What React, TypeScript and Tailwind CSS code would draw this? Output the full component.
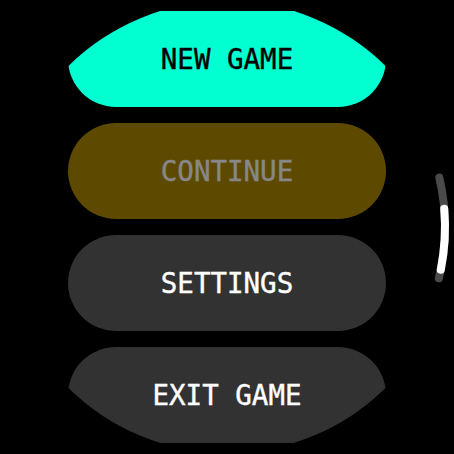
import React from "react";

const items = [
  { label: "NEW GAME", cls: "bg-[#02ffd2] text-black" },
  { label: "CONTINUE", cls: "bg-[#5d4a00] text-[#878787]" },
  { label: "SETTINGS", cls: "bg-[#323232] text-white" },
  { label: "EXIT GAME", cls: "bg-[#323232] text-white" },
];

function arc(r: number, a0: number, a1: number) {
  const cx = 227;
  const cy = 227;
  const p = (a: number) => {
    const t = (a * Math.PI) / 180;
    return [cx + r * Math.cos(t), cy + r * Math.sin(t)];
  };
  const [x0, y0] = p(a0);
  const [x1, y1] = p(a1);
  return `M ${x0} ${y0} A ${r} ${r} 0 0 1 ${x1} ${y1}`;
}

export default function App() {
  return (
    <div className="relative w-[454px] h-[454px] bg-black overflow-hidden">
      <div
        className="w-[454px] h-[454px] flex flex-col gap-[16px] px-[68px] pt-[11px] [clip-path:circle(226px_at_227px_227px)]"
        style={{ fontFamily: '"DejaVu Sans Mono", monospace' }}
      >
        {items.map((it) => (
          <div
            key={it.label}
            className={`h-[96px] shrink-0 rounded-full flex items-center justify-center pt-[2px] text-[27.5px] leading-none [-webkit-text-stroke:0.4px_currentColor] ${it.cls}`}
          >
            {it.label}
          </div>
        ))}
      </div>
      <svg
        className="absolute left-0 top-0"
        width="454"
        height="454"
        viewBox="0 0 454 454"
      >
        <path
          d={arc(218, -13.1, 13.6)}
          stroke="#4a4a4a"
          strokeWidth="8"
          strokeLinecap="round"
          fill="none"
        />
        <path
          d={arc(218, -4.8, 11.3)}
          stroke="#ffffff"
          strokeWidth="8"
          strokeLinecap="round"
          fill="none"
        />
      </svg>
    </div>
  );
}
